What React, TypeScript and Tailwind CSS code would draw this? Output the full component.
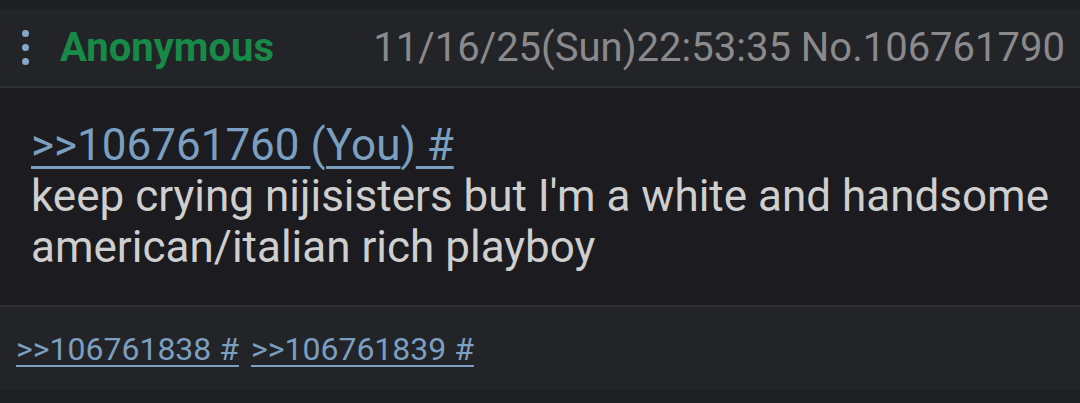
export default function App() {
  return (
    <div className="w-[1080px] h-[403px] flex flex-col bg-[#1f2023] font-['Roboto','Liberation_Sans',sans-serif] overflow-hidden">
      {/* top strip */}
      <div className="h-[9px] bg-[#1e1f22]" />

      {/* post header */}
      <div className="h-[77px] flex items-center bg-[#232428] pl-[22px] pr-[15px]">
        <div className="flex flex-col gap-[7px] w-[8px]">
          <span className="block w-[7px] h-[7px] rounded-full bg-[#86a8c8]" />
          <span className="block w-[7px] h-[7px] rounded-full bg-[#86a8c8]" />
          <span className="block w-[7px] h-[7px] rounded-full bg-[#86a8c8]" />
        </div>
        <span className="ml-[30px] text-[40px] font-bold text-[#178a47] leading-none">Anonymous</span>
        <span className="ml-auto text-[40px] text-[#8a8a8c] leading-none">
          11/16/25(Sun)22:53:35 No.106761790
        </span>
      </div>
      <div className="h-[2px] bg-[#2e2f33]" />

      {/* post body */}
      <div className="h-[217px] bg-[#1c1c20] pt-[32px] pl-[31px] pr-[20px] text-[44px] leading-[51px] text-[#cfcfcf]">
        <div className="text-[#7b9fc0]">
          <span className="underline decoration-[3px] underline-offset-[6px]">&gt;&gt;106761760 </span>
          (<span className="underline decoration-[3px] underline-offset-[6px]">You</span>)
          <span className="underline decoration-[3px] underline-offset-[6px]"> #</span>
        </div>
        <p>keep crying nijisisters but I'm a white and handsome american/italian rich playboy</p>
      </div>
      <div className="h-[2px] bg-[#2e2f33]" />

      {/* replies */}
      <div className="h-[83px] flex items-center gap-[12px] bg-[#232428] pl-[16px] text-[32px] text-[#7b9fc0]">
        <span className="underline decoration-[2px] underline-offset-[5px]">&gt;&gt;106761838 #</span>
        <span className="underline decoration-[2px] underline-offset-[5px]">&gt;&gt;106761839 #</span>
      </div>

      <div className="flex-1 bg-[#1f2022]" />
    </div>
  )
}
